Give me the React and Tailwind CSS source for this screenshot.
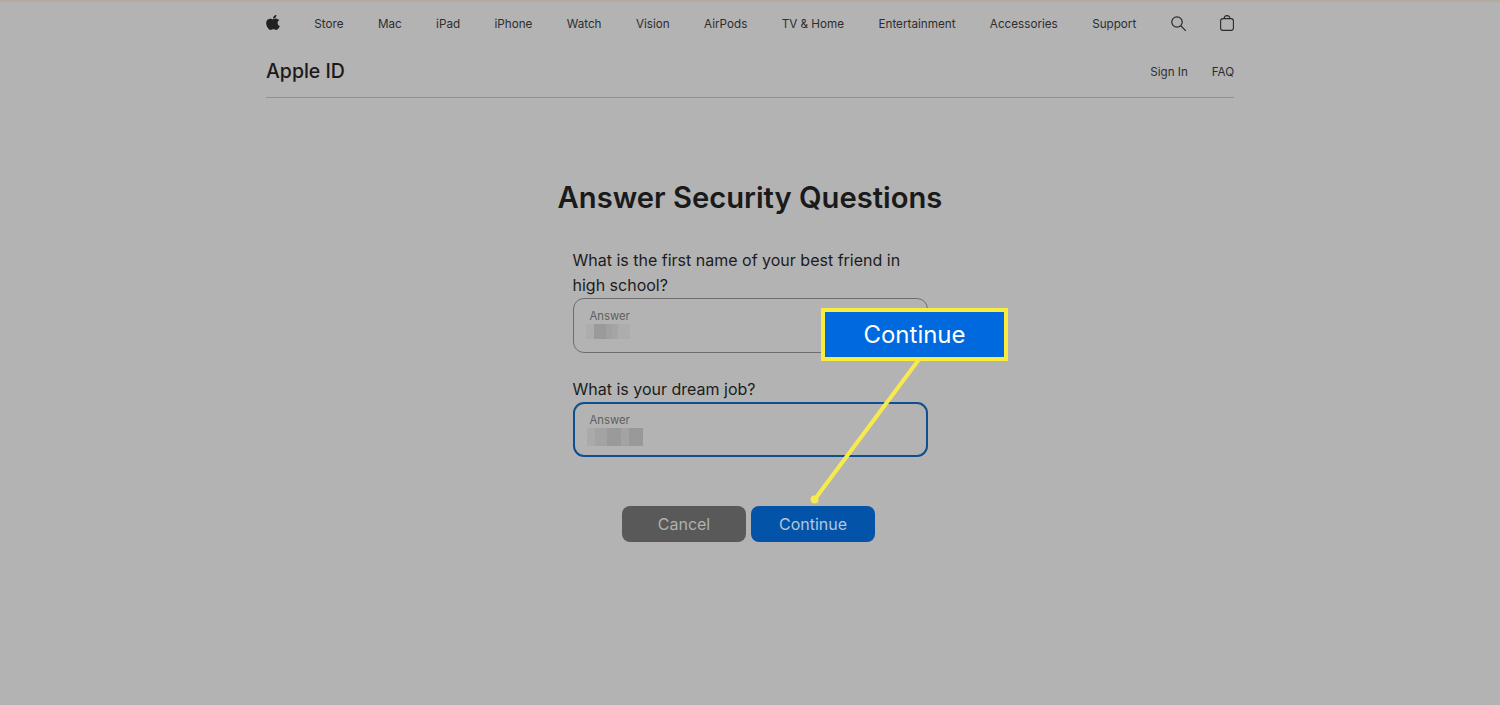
const navItems = ["Store","Mac","iPad","iPhone","Watch","Vision","AirPods","TV & Home","Entertainment","Accessories","Support"];

function AppleLogo() {
  return (
    <svg width="14" height="17" viewBox="0 0 384 512" preserveAspectRatio="none" className="fill-[#222222] -translate-y-[2px]">
      <path d="M318.7 268.7c-.2-36.7 16.4-64.4 50-84.8-18.8-26.9-47.2-41.7-84.7-44.6-35.5-2.8-74.3 20.7-88.5 20.7-15 0-49.4-19.7-76.4-19.7C63.3 141.2 4 184.8 4 273.5q0 39.3 14.4 81.2c12.8 36.7 59 126.7 107.2 125.2 25.2-.6 43-17.9 75.8-17.9 31.8 0 48.3 17.9 76.4 17.9 48.6-.7 90.4-82.5 102.6-119.3-65.2-30.7-61.7-90-61.7-91.9zm-56.6-164.2c27.3-32.4 24.8-61.9 24-72.5-24.1 1.4-52 16.4-67.9 34.9-17.5 19.8-27.8 44.3-25.6 71.9 26.1 2 49.9-11.4 69.5-34.3z" />
    </svg>
  );
}

function Field({ label, focused, children }) {
  return (
    <div className="w-[355px]">
      <p className="text-[16px] leading-[24.5px] text-[#1c1c1c]">{label}</p>
      <div className={focused
        ? "h-[55px] rounded-[11px] border-2 border-[#0f4f8f] px-[15px] pt-[8px]"
        : "mt-[1px] h-[55px] rounded-[11px] border border-[#6e6e6e] px-[16px] pt-[9px]"}>
        <p className="text-[11.3px] leading-[16px] text-[#5f5f5f]">Answer</p>
        {children}
      </div>
    </div>
  );
}

export default function App() {
  return (
    <div className="relative h-[705px] w-[1500px] overflow-hidden bg-[#b3b3b3] font-['Inter',sans-serif]">
      <div className="h-[2px] bg-[#b3ab9f]" />
      <div className="mx-auto w-[968px]">
        <nav className="flex h-[44px] items-center justify-between pt-[1px] text-[11.7px] text-[#2e2e2e]">
          <AppleLogo />
          {navItems.map((item) => (
            <span key={item}>{item}</span>
          ))}
          <svg width="15" height="15" viewBox="0 0 15 15" fill="none" stroke="#2a2a2a" strokeWidth="1.2" className="-translate-y-[1px]">
            <circle cx="6" cy="6" r="5.2" />
            <path d="M10 10l4.6 4.6" strokeLinecap="round" />
          </svg>
          <svg width="14" height="16" viewBox="0 0 14 16" fill="none" stroke="#2a2a2a" strokeWidth="1.1" className="-translate-y-[2px]">
            <rect x="0.6" y="3.6" width="12.8" height="11.8" rx="2.4" />
            <path d="M4.2 3.6C4.2 1.8 5.3.6 7 .6s2.8 1.2 2.8 3" />
          </svg>
        </nav>
        <header className="flex h-[52px] items-center justify-between border-b border-[#8f8f8f]">
          <span className="text-[19.5px] font-medium text-[#1a1a1a]">Apple ID</span>
          <div className="mt-[2px] flex gap-[24px] text-[11.6px] text-[#2e2e2e]">
            <span>Sign In</span>
            <span>FAQ</span>
          </div>
        </header>
      </div>

      <main className="flex flex-col items-center">
        <h1 className="mt-[79px] text-[29.2px] font-semibold leading-[42px] text-[#1a1a1a]">Answer Security Questions</h1>
        <div className="mt-[29px] flex flex-col gap-[24px]">
          <Field label="What is the first name of your best friend in high school?">
            <div className="flex h-[15px] w-[48px] -translate-x-[4px]">
              <div className="w-[8px] bg-[#adadad]" />
              <div className="w-[12px] bg-[#9a9a9a]" />
              <div className="w-[6px] bg-[#a1a1a1]" />
              <div className="w-[6px] bg-[#a5a5a5]" />
              <div className="w-[12px] bg-[#adadad]" />
            </div>
          </Field>
          <Field label="What is your dream job?" focused>
            <div className="flex h-[18px] w-[56px] -translate-x-[3px]">
              <div className="w-[8px] bg-[#aaaaaa]" />
              <div className="w-[12px] bg-[#a3a3a3]" />
              <div className="w-[14px] bg-[#9a9a9a]" />
              <div className="w-[8px] bg-[#a3a3a3]" />
              <div className="w-[14px] bg-[#999999]" />
            </div>
          </Field>
        </div>
        <div className="mt-[49px] mr-[3px] flex gap-[5px] text-[16px]">
          <button className="h-[36px] w-[124px] rounded-[8px] bg-[#595959] text-[#b0b0b0]">Cancel</button>
          <button className="h-[36px] w-[124px] rounded-[8px] bg-[#0353a8] text-[#b1c8df]">Continue</button>
        </div>
      </main>

      <svg className="absolute left-[805px] top-[355px]" width="125" height="152" viewBox="0 0 125 152" fill="none">
        <path d="M115 3L10 144" stroke="#f6ea4f" strokeWidth="4" />
        <circle cx="9.5" cy="144.5" r="4" fill="#f6ea4f" />
      </svg>
      <div className="absolute left-[821px] top-[308px] flex h-[53px] w-[187px] items-center justify-center border-[4px] border-[#f9ec3f] bg-[#0069dd] text-[24px] text-white">
        Continue
      </div>
    </div>
  );
}
